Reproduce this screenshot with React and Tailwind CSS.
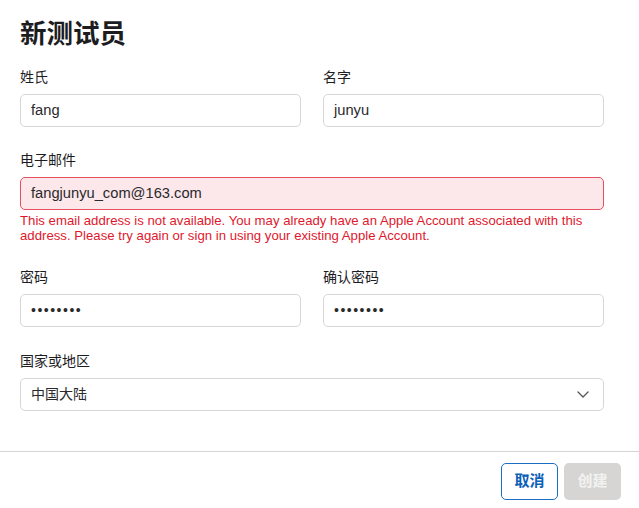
import React from "react";

function Label({ children }) {
  return (
    <div className="h-[20px] text-[14px] leading-[20px] text-[#1d1d1f]">{children}</div>
  );
}

function Field({ children, className = "" }) {
  return (
    <div
      className={
        "mt-[7px] flex h-[33px] items-center rounded-[5px] border border-[#d6d6d6] bg-white pl-[10px] text-[14.7px] text-[#2a2a2c] " +
        className
      }
    >
      {children}
    </div>
  );
}

function Dots() {
  return (
    <span className="text-[14px] tracking-[1.5px] text-[#2a2a2c]">••••••••</span>
  );
}

export default function App() {
  return (
    <div
      className="flex h-[508px] w-[639px] flex-col bg-white"
      style={{ fontFamily: '"Liberation Sans", "Noto Sans CJK SC", sans-serif' }}
    >
      <div className="pl-[20px] pr-[35px] pt-[18px]">
        <h1 className="h-[32px] text-[26.5px] font-bold leading-[32px] text-[#1d1d1f]">新测试员</h1>

        <div className="mt-[17px] grid grid-cols-2 gap-x-[22px]">
          <div>
            <Label>姓氏</Label>
            <Field>fang</Field>
          </div>
          <div>
            <Label>名字</Label>
            <Field>junyu</Field>
          </div>
        </div>

        <div className="mt-[23px]">
          <Label>电子邮件</Label>
          <Field className="!border-[#e5505f] !bg-[#fce8ea]">fangjunyu_com@163.com</Field>
          <p className="mt-[3px] text-[13.2px] leading-[15px] text-[#e0182d]">
            This email address is not available. You may already have an Apple Account associated with this
            address. Please try again or sign in using your existing Apple Account.
          </p>
        </div>

        <div className="mt-[24px] grid grid-cols-2 gap-x-[22px]">
          <div>
            <Label>密码</Label>
            <Field>
              <Dots />
            </Field>
          </div>
          <div>
            <Label>确认密码</Label>
            <Field>
              <Dots />
            </Field>
          </div>
        </div>

        <div className="mt-[24px]">
          <Label>国家或地区</Label>
          <Field className="justify-between pr-[14px]">
            <span className="text-[14px]">中国大陆</span>
            <svg width="12" height="7" viewBox="0 0 12 7" fill="none">
              <path d="M1 1l5 5 5-5" stroke="#555" strokeWidth="1.3" strokeLinecap="round" strokeLinejoin="round" />
            </svg>
          </Field>
        </div>
      </div>

      <div className="mt-[40px] border-t border-[#d4d4d4]" />

      <div className="flex justify-end gap-[6px] pr-[18px] pt-[11px]">
        <button className="flex h-[37px] w-[57px] items-center justify-center rounded-[5px] border border-[#1a6fc4] bg-white text-[15px] font-bold text-[#0d60b8]">
          取消
        </button>
        <button className="flex h-[37px] w-[57px] items-center justify-center rounded-[5px] bg-[#d6d5d4] text-[15px] font-bold text-[#f2f2f2]">
          创建
        </button>
      </div>
    </div>
  );
}
